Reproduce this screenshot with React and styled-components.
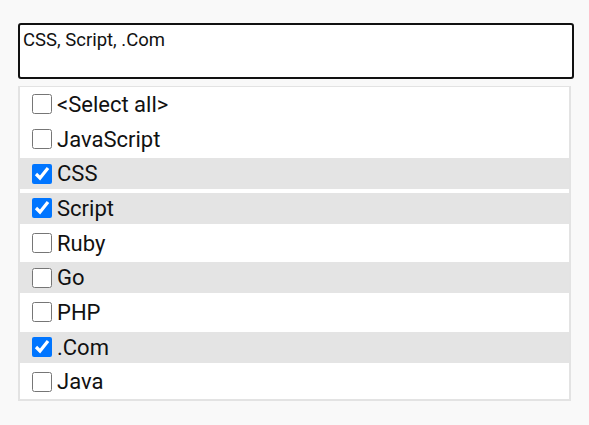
import React, { useState } from 'react';
import styled, { createGlobalStyle } from 'styled-components';

const GlobalStyle = createGlobalStyle`
	body {
		margin: 0;
		background: #f9f9f9;
		font-family: Roboto, 'Liberation Sans', sans-serif;
		color: #111;
	}
`;

const Page = styled.div`
	padding: 23px 0 0 18px;
	width: 556px;
`;

const Field = styled.div`
	box-sizing: border-box;
	height: 56px;
	border: 2px solid #111;
	border-radius: 3px;
	background: #fff;
	padding: 5px 3px;
	font-size: 18.5px;
	line-height: 21px;
`;

const List = styled.ul`
	display: flex;
	flex-direction: column;
	list-style: none;
	margin: 7px 0 0;
	padding: 0;
	width: 553px;
	box-sizing: border-box;
	background: #fff;
	border: solid #e3e3e3;
	border-width: 1px 2px 2px 2px;
`;

const Item = styled.li`
	display: flex;
	align-items: center;
	gap: 5px;
	height: 30.7px;
	margin: 2px 0;
	padding-left: 12px;
	background: ${(p) => (p.$highlighted ? '#e4e4e4' : 'transparent')};
	font-size: 22px;
	cursor: default;
`;

const Check = styled.input`
	width: 20px;
	height: 20px;
	margin: 0;
	accent-color: #0075ff;
`;

const options = [
	{ label: '<Select all>' },
	{ label: 'JavaScript' },
	{ label: 'CSS', checked: true, highlighted: true },
	{ label: 'Script', checked: true, highlighted: true },
	{ label: 'Ruby' },
	{ label: 'Go', highlighted: true },
	{ label: 'PHP' },
	{ label: '.Com', checked: true, highlighted: true },
	{ label: 'Java' },
];

const App = () => {
	const [items, setItems] = useState(options);

	const toggle = (i) => {
		setItems(items.map((it, j) => (j === i ? { ...it, checked: !it.checked } : it)));
	};

	const selected = items.filter((it) => it.checked).map((it) => it.label).join(', ');

	return (
		<>
			<GlobalStyle />
			<Page>
				<Field>{selected}</Field>
				<List>
					{items.map((it, i) => (
						<Item key={it.label} $highlighted={it.highlighted}>
							<Check type="checkbox" checked={!!it.checked} onChange={() => toggle(i)} />
							{it.label}
						</Item>
					))}
				</List>
			</Page>
		</>
	);
};

export default App;
